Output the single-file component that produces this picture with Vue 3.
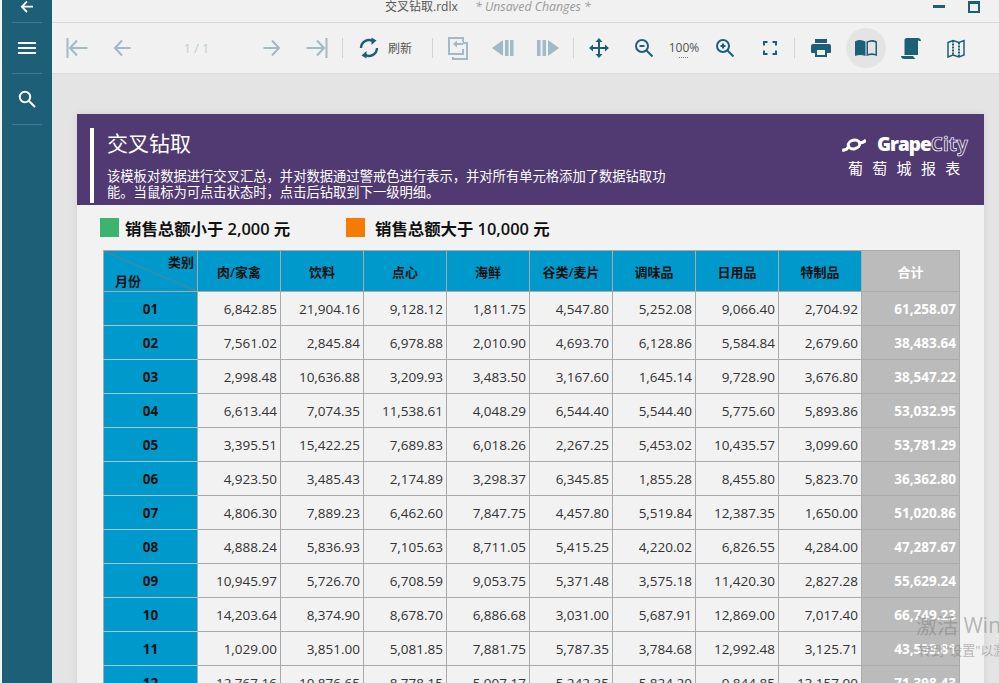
<script setup>
const cols = ['肉/家禽', '饮料', '点心', '海鲜', '谷类/麦片', '调味品', '日用品', '特制品']
const rows = [
  ['01', '6,842.85', '21,904.16', '9,128.12', '1,811.75', '4,547.80', '5,252.08', '9,066.40', '2,704.92', '61,258.07'],
  ['02', '7,561.02', '2,845.84', '6,978.88', '2,010.90', '4,693.70', '6,128.86', '5,584.84', '2,679.60', '38,483.64'],
  ['03', '2,998.48', '10,636.88', '3,209.93', '3,483.50', '3,167.60', '1,645.14', '9,728.90', '3,676.80', '38,547.22'],
  ['04', '6,613.44', '7,074.35', '11,538.61', '4,048.29', '6,544.40', '5,544.40', '5,775.60', '5,893.86', '53,032.95'],
  ['05', '3,395.51', '15,422.25', '7,689.83', '6,018.26', '2,267.25', '5,453.02', '10,435.57', '3,099.60', '53,781.29'],
  ['06', '4,923.50', '3,485.43', '2,174.89', '3,298.37', '6,345.85', '1,855.28', '8,455.80', '5,823.70', '36,362.80'],
  ['07', '4,806.30', '7,889.23', '6,462.60', '7,847.75', '4,457.80', '5,519.84', '12,387.35', '1,650.00', '51,020.86'],
  ['08', '4,888.24', '5,836.93', '7,105.63', '8,711.05', '5,415.25', '4,220.02', '6,826.55', '4,284.00', '47,287.67'],
  ['09', '10,945.97', '5,726.70', '6,708.59', '9,053.75', '5,371.48', '3,575.18', '11,420.30', '2,827.28', '55,629.24'],
  ['10', '14,203.64', '8,374.90', '8,678.70', '6,886.68', '3,031.00', '5,687.91', '12,869.00', '7,017.40', '66,749.23'],
  ['11', '1,029.00', '3,851.00', '5,081.85', '7,881.75', '5,787.35', '3,784.68', '12,992.48', '3,125.71', '43,533.81'],
  ['12', '12,767.16', '10,876.65', '8,778.15', '5,907.17', '5,242.35', '5,824.20', '9,844.85', '13,157.90', '71,398.43'],
]
</script>

<template>
  <div class="app">
    <aside class="side">
      <div class="side-item top">
        <svg width="14" height="14" viewBox="0 0 14 14" fill="none" stroke="#fff" stroke-width="1.8"><path d="M7 1.500 1.800 6.700 7 12M2 6.700h11"/></svg>
      </div>
      <div class="side-item">
        <svg width="18" height="12" viewBox="0 0 18 12" fill="#fff"><rect width="18" height="2"/><rect y="5" width="18" height="2"/><rect y="10" width="18" height="2"/></svg>
      </div>
      <div class="side-item">
        <svg width="18" height="18" viewBox="0 0 18 18" fill="none" stroke="#fff" stroke-width="2"><circle cx="7" cy="7" r="5.200"/><path d="m11 11 6 6"/></svg>
      </div>
    </aside>

    <main class="main">
      <header class="titlebar">
        <span class="doc">交叉钻取.rdlx</span>
        <span class="unsaved">* Unsaved Changes *</span>
        <span class="win-min"></span>
        <span class="win-max"></span>
      </header>

      <nav class="toolbar">
        <button class="btn">
          <svg class="off" width="22" height="22" viewBox="0 0 22 22" fill="none" stroke="currentColor" stroke-width="2"><path d="M1.500 1v20"/><path d="M11 3.500 4 11l7 7.500M4 11h17.500"/></svg>
        </button>
        <button class="btn">
          <svg class="off" width="18" height="18" viewBox="0 0 18 18" fill="none" stroke="currentColor" stroke-width="2"><path d="M9 1.500 2 9l7 7.500M2 9h15.500"/></svg>
        </button>
        <span class="pager">1 / 1</span>
        <button class="btn">
          <svg class="off" width="18" height="18" viewBox="0 0 18 18" fill="none" stroke="currentColor" stroke-width="2"><path d="M9 1.500 16 9l-7 7.500M16 9H.5"/></svg>
        </button>
        <button class="btn">
          <svg class="off" width="22" height="22" viewBox="0 0 22 22" fill="none" stroke="currentColor" stroke-width="2"><path d="M20.500 1v20"/><path d="m11 3.500 7 7.500-7 7.500M18 11H.5"/></svg>
        </button>
        <i class="sep"></i>
        <button class="btn refresh">
          <svg width="20" height="22" viewBox="0 0 20 22" fill="none" stroke="#1e5f78" stroke-width="2.400"><path d="M2 11a8 8 0 0 1 12-6.800"/><path d="M18 11a8 8 0 0 1-12 6.800"/><path d="M12.500 0.500v7.500l5-4.500z" fill="#1e5f78" stroke="none"/><path d="M7.500 21.500V14l-5 4.500z" fill="#1e5f78" stroke="none"/></svg>
          <span>刷新</span>
        </button>
        <i class="sep s1"></i>
        <button class="btn">
          <svg class="off" width="20" height="23" viewBox="0 0 20 23" fill="none" stroke="currentColor" stroke-width="2"><path d="M15 5V1H1v16h14v-5"/><path d="M15 6h4v16H5v-2"/><path d="M15 7H7"/><path d="M9 4 5.500 7 9 10" fill="currentColor" stroke-width="1"/></svg>
        </button>
        <button class="btn">
          <svg class="off" width="22" height="16" viewBox="0 0 22 16" fill="currentColor"><path d="M11 0v16L0 8z"/><rect x="13" width="3.500" height="16"/><rect x="18" width="3.500" height="16"/></svg>
        </button>
        <button class="btn">
          <svg class="off" width="22" height="16" viewBox="0 0 22 16" fill="currentColor"><path d="M11 0v16l11-8z"/><rect width="3.500" height="16"/><rect x="5.500" width="3.500" height="16"/></svg>
        </button>
        <i class="sep s2"></i>
        <button class="btn">
          <svg width="20" height="20" viewBox="0 0 20 20" fill="#1e5f78"><path d="M9 3h2v14H9zM3 9h14v2H3z"/><path d="M10 0l3.500 4h-7zM10 20l-3.500-4h7zM0 10l4-3.500v7zM20 10l-4 3.500v-7z"/></svg>
        </button>
        <button class="btn">
          <svg width="18" height="18" viewBox="0 0 18 18" fill="none" stroke="#1e5f78" stroke-width="2"><circle cx="7" cy="7" r="6"/><path d="m11.500 11.500 6 6M4.500 7h5"/></svg>
        </button>
        <span class="zoom">100%</span>
        <button class="btn">
          <svg width="18" height="18" viewBox="0 0 18 18" fill="none" stroke="#1e5f78" stroke-width="2"><circle cx="7" cy="7" r="6"/><path d="m11.500 11.500 6 6M4.500 7h5M7 4.500v5"/></svg>
        </button>
        <button class="btn">
          <svg width="14" height="14" viewBox="0 0 14 14" fill="none" stroke="#1e5f78" stroke-width="2"><path d="M1 4.500V1h3.500M9.500 1H13v3.500M13 9.500V13H9.500M4.500 13H1V9.500"/></svg>
        </button>
        <i class="sep s3"></i>
        <button class="btn">
          <svg width="20" height="18" viewBox="0 0 20 18" fill="#1e5f78"><path d="M4 0h12v4H4zM2 5h16a2 2 0 0 1 2 2v6a1 1 0 0 1-1 1h-3v4H4v-4H1a1 1 0 0 1-1-1V7a2 2 0 0 1 2-2z"/><path fill="#f1f1f1" d="M6 11h8v5H6z"/></svg>
        </button>
        <button class="btn current">
          <svg width="22" height="18" viewBox="0 0 22 18" fill="#1e5f78"><path d="M0 2.500C3 .5 7 .5 10.500 2.500V17C7 15.500 3 15.500 0 17z"/><path fill-rule="evenodd" d="M11.500 2.500c3.500-2 7.500-2 10.500 0V17c-3-1.500-7-1.500-10.500 0zM13 3.500V15c2.500-1 5-1 7.500 0V3.500C18 2.500 15.500 2.500 13 3.500z"/></svg>
        </button>
        <button class="btn">
          <svg width="20" height="21" viewBox="0 0 20 21" fill="#1e5f78"><path d="M3.500 1.500C4 .5 5 0 6 0h11c1.500 0 3 1 3 3h-2.500c0-.8-.3-1.200-.5-1.500V17H3.500z"/><path d="M0 18h12c.5 1 1.500 2 2.500 3H3c-2 0-3-1.500-3-3z"/></svg>
        </button>
        <button class="btn">
          <svg width="18" height="19" viewBox="0 0 18 19" fill="none" stroke="#1e5f78" stroke-width="1.500"><path d="M1 3.500 6 1.500l6 2 5-2V16l-5 2-6-2-5 2z"/><path d="M6 1.500V16M12 3.500V18" stroke-dasharray="2 1" stroke-width="2"/></svg>
        </button>
      </nav>

      <section class="canvas">
        <article class="sheet">
          <div class="banner">
            <div class="banner-text">
              <h1>交叉钻取</h1>
              <p>该模板对数据进行交叉汇总，并对数据通过警戒色进行表示，并对所有单元格添加了数据钻取功能。当鼠标为可点击状态时，点击后钻取到下一级明细。</p>
            </div>
            <div class="brand">
              <div class="brand-logo">
                <svg width="24" height="15" viewBox="0 0 24 15" fill="none" stroke="#fff" stroke-width="3"><ellipse cx="12" cy="7.500" rx="5.800" ry="4.300" transform="rotate(-12 12 7.500)"/><path d="M.2 13c2.800.5 5-.5 6.300-3.500M17 5.500c2.500.5 5 0 7-2.500"/></svg>
                <span class="grape">Grape</span><span class="city">City</span>
              </div>
              <div class="tagline">葡 萄 城 报 表</div>
            </div>
          </div>

          <div class="legend">
            <span class="swatch green"></span>
            <span class="legend-text first">销售总额小于 2,000 元</span>
            <span class="swatch orange"></span>
            <span class="legend-text">销售总额大于 10,000 元</span>
          </div>

          <table class="report">
            <colgroup>
              <col class="c-first" />
              <col v-for="c in cols" :key="c" class="c-num" />
              <col class="c-total" />
            </colgroup>
            <thead>
              <tr>
                <th class="corner"><span class="cat">类别</span><span class="mon">月份</span></th>
                <th v-for="c in cols" :key="c">{{ c }}</th>
                <th class="total">合计</th>
              </tr>
            </thead>
            <tbody>
              <tr v-for="r in rows" :key="r[0]">
                <th class="month">{{ r[0] }}</th>
                <td v-for="(v, i) in r.slice(1, 9)" :key="i">{{ v }}</td>
                <td class="total">{{ r[9] }}</td>
              </tr>
            </tbody>
          </table>
        </article>

        <div class="watermark">
          <div class="wm-a">激活 Windows</div>
          <div class="wm-b">转到"设置"以激活 Windows。</div>
        </div>
      </section>
    </main>
  </div>
</template>

<style>
html, body { margin: 0; overflow: hidden; }
</style>

<style scoped>
.app {
  display: flex;
  width: 999px;
  height: 683px;
  overflow: hidden;
  padding-left: 2px;
  box-sizing: border-box;
  background: #f4f4f4;
  font-family: "Open Sans", "Noto Sans CJK SC", sans-serif;
  color: #222;
}
.side {
  width: 50px;
  flex: none;
  background: #1e5f78;
  display: flex;
  flex-direction: column;
}
.side-item {
  height: 51px;
  margin: 0 10px;
  display: flex;
  align-items: center;
  justify-content: center;
  border-bottom: 1px solid #3f7a90;
  box-sizing: border-box;
}
.side-item.top {
  height: 23px;
  padding-bottom: 8px;
}
.main {
  flex: 1;
  min-width: 0;
  display: flex;
  flex-direction: column;
  position: relative;
}
.titlebar {
  height: 23px;
  flex: none;
  background: #f1f1f1;
  border-bottom: 1px solid #d9d9d9;
  box-sizing: border-box;
  display: flex;
  align-items: flex-start;
  padding-left: 333px;
  font-size: 12px;
  line-height: 14px;
  color: #555;
}
.doc { width: 90px; }
.unsaved {
  font-style: italic;
  color: #9a9a9a;
  font-size: 12.300px;
}
.win-min {
  position: absolute;
  left: 881px;
  top: 5px;
  width: 12px;
  height: 3px;
  background: #1e5f78;
}
.win-max {
  position: absolute;
  left: 916px;
  top: 1px;
  width: 8px;
  height: 7px;
  border: 2px solid #1e5f78;
  border-top-width: 3px;
}
.toolbar {
  height: 51px;
  flex: none;
  background: #f1f1f1;
  border-bottom: 1px solid #d9d9d9;
  box-sizing: border-box;
  display: flex;
  align-items: center;
  padding-left: 2px;
}
.btn {
  width: 45px;
  height: 40px;
  flex: none;
  padding: 0;
  border: 0;
  background: none;
  display: flex;
  align-items: center;
  justify-content: center;
  font: inherit;
}
.off { color: #a0bac6; }
.pager {
  width: 105px;
  flex: none;
  text-align: center;
  font-size: 12.500px;
  color: #bccbd2;
}
.sep {
  width: 1px;
  height: 20px;
  flex: none;
  background: #d4d4d4;
  margin: 0 3px 0 3px;
}
.refresh {
  width: 83px;
  justify-content: flex-start;
  padding-left: 16px;
  box-sizing: border-box;
  gap: 9px;
  font-size: 12px;
  color: #555;
  margin-right: 3px;
  margin-left: -3px;
}
.s1 { margin: 0 2px 0 3px; }
.s2 { margin: 0 2px 0 3px; }
.s3 { margin: 0 3px 0 2px; }
.zoom {
  width: 36px;
  flex: none;
  font-size: 12px;
  line-height: 14px;
  color: #555;
  text-align: center;
  position: relative;
}
.zoom::after {
  content: "";
  position: absolute;
  left: 13px;
  top: 16px;
  width: 9px;
  border-top: 1px dotted #777;
}
.current {
  width: 40px;
  margin: 0 2.5px;
  border-radius: 50%;
  background: #e4e4e4;
}
.canvas {
  flex: 1;
  min-height: 0;
  background: #e4e4e4;
  padding: 40px 15px 0 25px;
  overflow: hidden;
}
.sheet {
  width: 907px;
  background: #f2f2f2;
  box-shadow: 0 0 8px rgba(0, 0, 0, 0.08);
  height: 700px;
}
.banner {
  height: 91px;
  background: #513a72;
  color: #fff;
  display: flex;
  justify-content: space-between;
  padding: 14px 16px 0 13px;
  box-sizing: border-box;
}
.banner-text {
  width: 563px;
  height: 75px;
  border-left: 4px solid #fff;
  padding-left: 13px;
}
.banner-text h1 {
  margin: 0;
  font-size: 21px;
  font-weight: 400;
  line-height: 31px;
}
.banner-text p {
  margin: 9px 0 0;
  font-size: 13.300px;
  line-height: 16px;
}
.brand {
  width: 126px;
  padding-top: 6px;
}
.brand-logo {
  display: flex;
  align-items: center;
  height: 20px;
  font-size: 19px;
  font-weight: 800;
  letter-spacing: -1px;
}
.brand-logo svg { margin-right: 11px; }
.city {
  color: transparent;
  -webkit-text-stroke: 0.7px #fff;
  font-weight: 700;
  letter-spacing: 0;
}
.tagline {
  font-size: 15px;
  line-height: 20px;
  margin-top: 4px;
  margin-left: 6px;
  letter-spacing: 2.700px;
  white-space: nowrap;
}
.legend {
  height: 45px;
  display: flex;
  align-items: center;
  padding-left: 23px;
}
.swatch {
  width: 19px;
  height: 19px;
  flex: none;
}
.green { background: #3cb371; }
.orange { background: #f57c00; }
.legend-text {
  margin-left: 6px;
  font-size: 16.400px;
  font-weight: 600;
  color: #111;
  white-space: nowrap;
}
.legend-text.first { width: 221px; }
.legend-text:not(.first) { margin-left: 10px; }
.report {
  margin-left: 26px;
  border-collapse: collapse;
  table-layout: fixed;
  width: 856px;
  font-size: 13.500px;
}
.c-first { width: 94px; }
.c-num { width: 83px; }
.c-total { width: 98px; }
.report th,
.report td {
  border: 1px solid #aaa;
  padding: 0;
  box-sizing: border-box;
}
.report thead tr { height: 41px; }
.report tbody tr { height: 34px; }
.report th {
  background: #0099cc;
  color: #111;
  font-size: 13px;
  font-weight: 600;
  text-align: center;
}
.report td {
  text-align: right;
  padding-right: 3px;
  color: #333;
  white-space: nowrap;
}
.report .month {
  font-size: 13.500px;
  font-weight: 700;
  border-color: #a9c6d2;
  border-right-color: #aaa;
  border-left-color: #aaa;
}
.report .total {
  background: #bbb;
  color: #fff;
  font-weight: 700;
}
.corner {
  position: relative;
  background-image: linear-gradient(to bottom left, transparent calc(50% - 0.8px), #6f7f86 50%, transparent calc(50% + 0.8px)) !important;
}
.cat {
  position: absolute;
  right: 3px;
  top: 2px;
  line-height: 18px;
}
.mon {
  position: absolute;
  left: 11px;
  bottom: 1px;
  line-height: 18px;
}
.watermark {
  position: absolute;
  left: 864px;
  top: 610px;
  width: 300px;
  color: rgba(130, 130, 130, 0.55);
  white-space: nowrap;
  pointer-events: none;
}
.wm-a {
  font-size: 21px;
  line-height: 30px;
}
.wm-b {
  font-size: 13px;
  line-height: 18px;
  margin-top: 1px;
  margin-left: 2px;
}
</style>
